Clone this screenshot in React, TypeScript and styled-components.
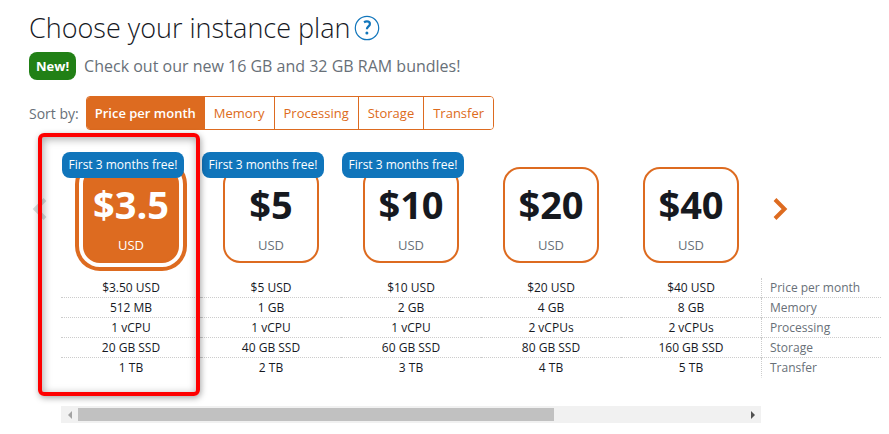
import React, { useState } from "react";
import styled, { createGlobalStyle } from "styled-components";

const orange = "#dd6b20";
const blue = "#1075bb";
const grey = "#687078";
const ink = "#16191f";

const GlobalStyle = createGlobalStyle`
  *, *::before, *::after { box-sizing: border-box; }
  body {
    margin: 0;
    background: #fff;
    color: ${ink};
    font-family: "Open Sans", "Noto Sans", sans-serif;
    font-size: 14px;
  }
  button { font: inherit; cursor: pointer; }
`;

const Page = styled.main`
  padding: 8px 8px 10px 29px;
`;

const TitleRow = styled.header`
  display: flex;
  align-items: center;
  gap: 4px;
  height: 40px;
`;

const Title = styled.h1`
  margin: 0;
  font-size: 27px;
  font-weight: 300;
  line-height: 40px;
`;

const HelpButton = styled.button`
  display: flex;
  padding: 0;
  border: 0;
  background: none;
  color: ${blue};
`;

const Notice = styled.p`
  display: flex;
  align-items: center;
  gap: 8px;
  margin: 4px 0 16px;
  color: ${grey};
  font-size: 16px;
  line-height: 28px;
`;

const NewTag = styled.span`
  padding: 0 7px;
  border-radius: 8px;
  background: #218016;
  color: #fff;
  font-size: 13px;
  font-weight: 700;
`;

const SortRow = styled.div`
  display: flex;
  align-items: center;
  gap: 7px;
  color: ${grey};
`;

const SortGroup = styled.div`
  display: flex;
  border: 1px solid ${orange};
  border-radius: 4px;
  overflow: hidden;
`;

const SortButton = styled.button<{ $active: boolean }>`
  height: 32px;
  padding: 0 9px;
  border: 0;
  background: ${(p) => (p.$active ? orange : "#fff")};
  color: ${(p) => (p.$active ? "#fff" : orange)};
  font-size: 13px;
  font-weight: ${(p) => (p.$active ? 600 : 400)};
  & + & { border-left: 1px solid ${orange}; }
  &:first-child { padding: 0 8px; }
`;

const Carousel = styled.section`
  display: grid;
  grid-template-columns: 32px minmax(0, 1fr);
  padding-top: 22px;
`;

const ArrowButton = styled.button<{ $color: string }>`
  display: flex;
  align-items: center;
  justify-content: flex-start;
  height: 24px;
  padding: 0;
  border: 0;
  background: none;
  color: ${(p) => p.$color};
`;

const PrevSlot = styled.div`
  padding: 45px 0 0 3px;
`;

const NextSlot = styled.div`
  padding: 45px 0 0 11px;
`;

const Plans = styled.div`
  position: relative;
`;

const CardRow = styled.div`
  display: grid;
  grid-template-columns: repeat(5, minmax(0, 1fr)) 120px;
  height: 126px;
`;

const CardCell = styled.div`
  position: relative;
  display: flex;
  justify-content: center;
  padding-top: 15px;
`;

const PlanCard = styled.button<{ $selected: boolean }>`
  display: flex;
  flex-direction: column;
  align-items: center;
  width: 96px;
  height: 96px;
  padding: 9px 0 0;
  border: 2px solid ${orange};
  border-radius: 17px;
  background: ${(p) => (p.$selected ? orange : "#fff")};
  color: ${(p) => (p.$selected ? "#fff" : ink)};
  box-shadow: ${(p) =>
    p.$selected ? `0 0 0 4px #fff, 0 0 0 8px ${orange}` : "none"};
`;

const Price = styled.span`
  font-size: 38px;
  font-weight: 700;
  line-height: 52px;
`;

const Currency = styled.span<{ $selected: boolean }>`
  color: ${(p) => (p.$selected ? "#fff" : grey)};
  font-size: 13px;
  line-height: 30px;
`;

const FreeBadge = styled.span`
  position: absolute;
  top: 0;
  left: 1px;
  width: 122px;
  border-radius: 8px;
  background: ${blue};
  color: #fff;
  font-size: 12px;
  font-weight: 500;
  line-height: 26px;
  text-align: center;
  white-space: nowrap;
`;

const SpecTable = styled.table`
  width: 100%;
  table-layout: fixed;
  border-collapse: separate;
  border-spacing: 0;
  font-size: 12px;
  line-height: 19px;
`;

const PlanCol = styled.col``;

const LabelCol = styled.col`
  width: 120px;
`;

const SpecRow = styled.tr`
  td, th { border-bottom: 1px dotted #ccc; }
  &:last-child td, &:last-child th { border-bottom-color: transparent; }
`;

const Spec = styled.td`
  padding: 0;
  text-align: center;
`;

const SpecLabel = styled.th`
  padding: 0 0 0 8px;
  border-left: 1px dotted #ccc;
  color: ${grey};
  font-weight: 400;
  text-align: left;
`;

const ScrollTrack = styled.div`
  display: grid;
  grid-template-columns: 17px minmax(0, 1fr) 17px;
  align-items: center;
  height: 17px;
  margin: 28px 120px 0 0;
  background: #f1f1f1;
`;

const ScrollStep = styled.button<{ $color: string }>`
  display: flex;
  align-items: center;
  justify-content: center;
  height: 17px;
  padding: 0;
  border: 0;
  background: none;
  color: ${(p) => p.$color};
`;

const ScrollThumb = styled.div`
  width: 71.5%;
  height: 13px;
  background: #c1c1c1;
`;

const Highlight = styled.div`
  position: absolute;
  top: -19px;
  left: -23px;
  width: calc((100% - 120px) / 5 + 22px);
  bottom: 27px;
  border: 4px solid #fe0000;
  border-radius: 6px;
  box-shadow: 1px 2px 6px rgba(0, 0, 0, 0.35),
    inset 1px 2px 8px rgba(0, 0, 0, 0.35);
  pointer-events: none;
`;

const HelpIcon = () => (
  <svg width="26" height="26" viewBox="0 0 26 26" fill="none" aria-hidden="true">
    <circle cx="13" cy="13" r="11.7" stroke="currentColor" strokeWidth="1.2" />
    <path
      d="M10 7.2C11 6.6 12 6.4 12.9 6.4c1.9 0 3 .9 3 2.5 0 2.5-3 2.6-3 5.4"
      stroke="currentColor"
      strokeWidth="2.2"
    />
    <circle cx="12.9" cy="17.9" r="1.5" fill="currentColor" />
  </svg>
);

const Chevron = ({ back }: { back?: boolean }) => (
  <svg width="16" height="24" viewBox="0 0 16 24" fill="none" aria-hidden="true">
    <path
      d={back ? "M13 2.5 3.5 12l9.5 9.5" : "M3 2.5 12.5 12 3 21.5"}
      stroke="currentColor"
      strokeWidth="4"
    />
  </svg>
);

const Triangle = ({ back }: { back?: boolean }) => (
  <svg width="4" height="8" viewBox="0 0 4 8" aria-hidden="true">
    <path d={back ? "M4 0v8L0 4z" : "M0 0v8l4-4z"} fill="currentColor" />
  </svg>
);

const sorts = ["Price per month", "Memory", "Processing", "Storage", "Transfer"];

const plans = [
  { price: "$3.5", free: true, specs: ["$3.50 USD", "512 MB", "1 vCPU", "20 GB SSD", "1 TB"] },
  { price: "$5", free: true, specs: ["$5 USD", "1 GB", "1 vCPU", "40 GB SSD", "2 TB"] },
  { price: "$10", free: true, specs: ["$10 USD", "2 GB", "1 vCPU", "60 GB SSD", "3 TB"] },
  { price: "$20", free: false, specs: ["$20 USD", "4 GB", "2 vCPUs", "80 GB SSD", "4 TB"] },
  { price: "$40", free: false, specs: ["$40 USD", "8 GB", "2 vCPUs", "160 GB SSD", "5 TB"] },
];

export default function App() {
  const [sort, setSort] = useState(0);
  const [selected, setSelected] = useState(0);

  return (
    <Page>
      <GlobalStyle />
      <TitleRow>
        <Title>Choose your instance plan</Title>
        <HelpButton aria-label="Help">
          <HelpIcon />
        </HelpButton>
      </TitleRow>
      <Notice>
        <NewTag>New!</NewTag>
        Check out our new 16 GB and 32 GB RAM bundles!
      </Notice>
      <SortRow>
        <span id="sort-label">Sort by:</span>
        <SortGroup role="group" aria-labelledby="sort-label">
          {sorts.map((name, i) => (
            <SortButton
              key={name}
              $active={i === sort}
              aria-pressed={i === sort}
              onClick={() => setSort(i)}
            >
              {name}
            </SortButton>
          ))}
        </SortGroup>
      </SortRow>
      <Carousel>
        <PrevSlot>
          <ArrowButton $color="#d5dbdb" aria-label="Previous plans">
            <Chevron back />
          </ArrowButton>
        </PrevSlot>
        <Plans>
          <CardRow>
            {plans.map((plan, i) => (
              <CardCell key={plan.price}>
                <PlanCard
                  $selected={i === selected}
                  aria-pressed={i === selected}
                  onClick={() => setSelected(i)}
                >
                  <Price>{plan.price}</Price>
                  <Currency $selected={i === selected}>USD</Currency>
                </PlanCard>
                {plan.free && <FreeBadge>First 3 months free!</FreeBadge>}
              </CardCell>
            ))}
            <NextSlot>
              <ArrowButton $color={orange} aria-label="Next plans">
                <Chevron />
              </ArrowButton>
            </NextSlot>
          </CardRow>
          <SpecTable>
            <colgroup>
              {plans.map((plan) => (
                <PlanCol key={plan.price} />
              ))}
              <LabelCol />
            </colgroup>
            <tbody>
              {sorts.map((name, row) => (
                <SpecRow key={name}>
                  {plans.map((plan) => (
                    <Spec key={plan.price}>{plan.specs[row]}</Spec>
                  ))}
                  <SpecLabel scope="row">{name}</SpecLabel>
                </SpecRow>
              ))}
            </tbody>
          </SpecTable>
          <ScrollTrack>
            <ScrollStep $color="#a3a3a3" aria-label="Scroll left">
              <Triangle back />
            </ScrollStep>
            <ScrollThumb />
            <ScrollStep $color="#505050" aria-label="Scroll right">
              <Triangle />
            </ScrollStep>
          </ScrollTrack>
          <Highlight />
        </Plans>
      </Carousel>
    </Page>
  );
}
